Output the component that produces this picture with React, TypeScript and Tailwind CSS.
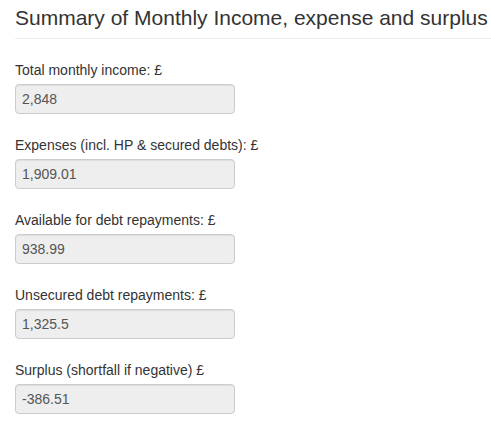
const rows = [
  { label: 'Total monthly income: £', value: '2,848' },
  { label: 'Expenses (incl. HP & secured debts): £', value: '1,909.01' },
  { label: 'Available for debt repayments: £', value: '938.99' },
  { label: 'Unsecured debt repayments: £', value: '1,325.5' },
  { label: 'Surplus (shortfall if negative) £', value: '-386.51' },
]

export default function App() {
  return (
    <div className="pl-[15px] pt-[6px] bg-white text-[#333] font-['Liberation_Sans',Arial,sans-serif]">
      <h3 className="text-[21px] leading-[1.1] pb-[9px] border-b border-[#eee] whitespace-nowrap">
        Summary of Monthly Income, expense and surplus
      </h3>
      <div className="mt-[21px]">
        {rows.map((row) => (
          <div key={row.label} className="mb-[21px]">
            <label className="block text-[14px] leading-[20px] mb-[4px]">{row.label}</label>
            <input
              type="text"
              readOnly
              value={row.value}
              className="block w-[220px] h-[30px] px-[6px] text-[14px] text-[#555] bg-[#eee] border border-[#ccc] rounded-[4px] shadow-[inset_0_1px_1px_rgba(0,0,0,0.075)] outline-none"
            />
          </div>
        ))}
      </div>
    </div>
  )
}
